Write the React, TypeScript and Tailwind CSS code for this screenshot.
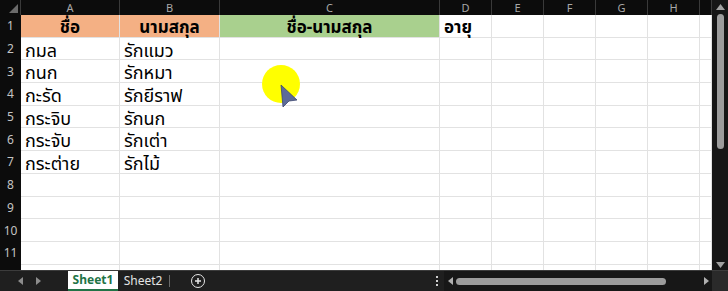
import React from 'react';

const cols = [
  { key: 'A', w: 'w-[99px]' },
  { key: 'B', w: 'w-[100px]' },
  { key: 'C', w: 'w-[220px]' },
  { key: 'D', w: 'w-[52px]' },
  { key: 'E', w: 'w-[52px]' },
  { key: 'F', w: 'w-[52px]' },
  { key: 'G', w: 'w-[52px]' },
  { key: 'H', w: 'w-[52px]' },
  { key: '', w: 'w-[12px]' },
];

const people = [
  ['กมล', 'รักแมว'],
  ['กนก', 'รักหมา'],
  ['กะรัด', 'รักยีราฟ'],
  ['กระจิบ', 'รักนก'],
  ['กระจับ', 'รักเต่า'],
  ['กระต่าย', 'รักไม้'],
];

const thai = "font-['Noto_Sans','Noto_Sans_Thai','Tahoma','DejaVu_Sans',sans-serif]";

const HeaderRow: React.FC = () => (
  <div className="relative z-10 flex h-[15px] shrink-0 bg-[#0c0c0c]">
    <div className="relative w-[21px] border-r border-[#3a3a3a]">
      <svg className="absolute right-[2px] bottom-[2px]" width="9" height="9" viewBox="0 0 9 9">
        <polygon points="9,0 9,9 0,9" fill="#6b6b6b" />
      </svg>
    </div>
    {cols.map((c, i) => (
      <div
        key={i}
        className={`${c.w} flex items-center justify-center border-r border-[#3a3a3a] text-[11px] leading-none text-[#a8a8a8]`}
      >
        {c.key}
      </div>
    ))}
  </div>
);

const Row: React.FC<{ n?: number; cells: React.ReactNode[] }> = ({ n, cells }) => (
  <div className="flex h-[22.7px] shrink-0">
    <div className="flex w-[21px] items-center justify-center bg-[#0c0c0c] text-[12px] text-[#c4c4c4]">{n}</div>
    {cols.map((c, i) => (
      <div key={i} className={`${c.w} shrink-0 border-r border-b border-[#e2e2e2] bg-white`}>
        {cells[i]}
      </div>
    ))}
  </div>
);

const Cell: React.FC<{ text: string; bg?: string; bold?: boolean; center?: boolean }> = ({ text, bg, bold, center }) => (
  <div
    className={`flex h-full items-center whitespace-nowrap px-[4px] pt-[2px] leading-[18px] text-black ${thai} ${
      bold ? 'text-[17px] font-bold' : 'text-[18px]'
    } ${center ? 'justify-center' : ''} ${bg ?? ''}`}
  >
    {text}
  </div>
);

export default function App() {
  const rows: React.ReactNode[][] = [
    [
      <Cell key="a" text="ชื่อ" bg="bg-[#f4b084]" bold center />,
      <Cell key="b" text="นามสกุล" bg="bg-[#f4b084]" bold center />,
      <Cell key="c" text="ชื่อ-นามสกุล" bg="bg-[#a9d08e]" bold center />,
      <Cell key="d" text="อายุ" bold />,
    ],
    ...people.map(([a, b]) => [<Cell key="a" text={a} />, <Cell key="b" text={b} />]),
    [],
    [],
    [],
    [],
  ];

  return (
    <div className="relative flex h-[291px] w-[728px] flex-col overflow-hidden bg-[#141414] font-['Noto_Sans',sans-serif]">
      <div className="flex h-[270px] shrink-0">
        {/* grid */}
        <div className="flex w-[712px] flex-col overflow-hidden bg-white">
          <HeaderRow />
          {rows.map((cells, i) => (
            <Row key={i} n={i + 1} cells={cells} />
          ))}
          <Row cells={[]} />
        </div>
        {/* vertical scrollbar */}
        <div className="relative flex w-[16px] flex-col items-center bg-[#161616]">
          <svg className="mt-[4px]" width="9" height="6" viewBox="0 0 9 6">
            <polygon points="4.5,0 9,6 0,6" fill="#a0a0a0" />
          </svg>
          <div className="mt-[4px] h-[135px] w-[7px] rounded-full bg-[#9c9c9c]" />
          <div className="flex-1" />
          <svg className="mb-[2px]" width="9" height="6" viewBox="0 0 9 6">
            <polygon points="0,0 9,0 4.5,6" fill="#a0a0a0" />
          </svg>
        </div>
      </div>

      {/* sheet tabs bar */}
      <div className="flex h-[21px] items-center border-t border-[#3c3c3c] bg-[#1f1f1f] text-[12px]">
        <div className="flex w-[68px] items-center gap-[13px] pl-[18px]">
          <svg width="5" height="8" viewBox="0 0 5 8">
            <polygon points="5,0 5,8 0,4" fill="#8c8c8c" />
          </svg>
          <svg width="5" height="8" viewBox="0 0 5 8">
            <polygon points="0,0 0,8 5,4" fill="#8c8c8c" />
          </svg>
        </div>
        <div className="flex h-full w-[50px] items-center justify-center self-start border-b-2 border-[#217346] bg-white font-bold text-[#217346]">
          Sheet1
        </div>
        <div className="flex w-[48px] items-center justify-center pl-[2px] text-[#e4e4e4]">Sheet2</div>
        <div className="ml-[3px] h-[12px] w-px bg-[#6a6a6a]" />
        <div className="ml-[21px] flex h-[14px] w-[14px] items-center justify-center rounded-full border border-[#e6e6e6]">
          <svg width="8" height="8" viewBox="0 0 8 8">
            <path d="M4 1v6M1 4h6" stroke="#e6e6e6" strokeWidth="1.5" />
          </svg>
        </div>
        <div className="flex-1" />
        <div className="flex w-[14px] flex-col items-center gap-[2px]">
          <div className="h-[2px] w-[2px] bg-[#d0d0d0]" />
          <div className="h-[2px] w-[2px] bg-[#d0d0d0]" />
          <div className="h-[2px] w-[2px] bg-[#d0d0d0]" />
        </div>
        <div className="flex h-full w-[268px] items-center bg-[#171717] pl-[4px] pr-[3px]">
          <svg width="5" height="8" viewBox="0 0 5 8">
            <polygon points="5,0 5,8 0,4" fill="#b0b0b0" />
          </svg>
          <div className="ml-[3px] h-[7px] w-[210px] rounded-full bg-[#9c9c9c]" />
          <div className="flex-1" />
          <svg width="5" height="8" viewBox="0 0 5 8">
            <polygon points="0,0 0,8 5,4" fill="#b0b0b0" />
          </svg>
        </div>
        <div className="h-full w-[16px] bg-[#2a2a2a]" />
      </div>

      {/* recording cursor highlight */}
      <div className="absolute left-[262px] top-[65px] h-[38px] w-[38px] rounded-full bg-[#ffff00]" />
      <svg className="absolute left-[278px] top-[82px]" width="22" height="26" viewBox="0 0 22 26">
        <polygon points="3,3 19,18 11,19 5,25" fill="#5d6b98" stroke="#3c4670" strokeWidth="0.8" />
      </svg>
    </div>
  );
}
